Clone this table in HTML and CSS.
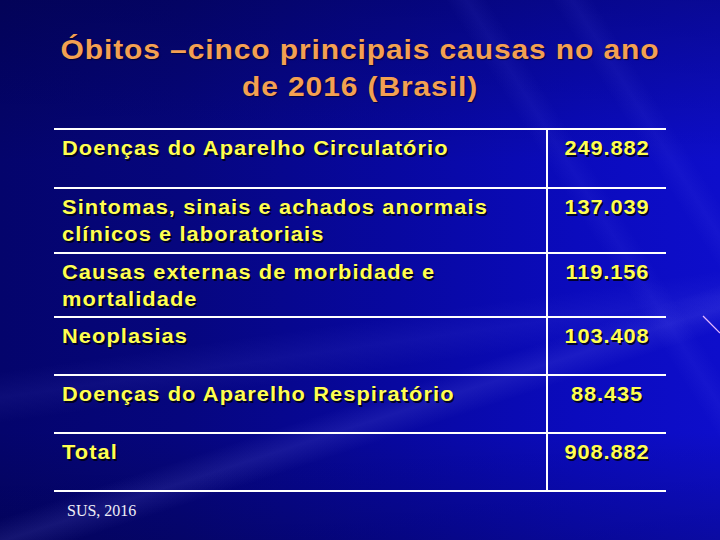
FILE: index.html
```html
<!DOCTYPE html>
<html lang="pt-BR">
<head>
<meta charset="utf-8">
<title>Óbitos – cinco principais causas</title>
<link rel="stylesheet" href="styles.css">
</head>
<body>
<div class="slide">
  <svg class="streak-line" width="20" height="20" viewBox="0 0 20 20"><line x1="1" y1="1" x2="18" y2="18" stroke="#e6b8ff" stroke-width="1.2"/></svg>
  <h1 class="title">
    <span class="title-line">Óbitos –cinco principais causas no ano</span>
    <span class="title-line">de 2016 (Brasil)</span>
  </h1>
  <div class="table">
    <div class="row">
      <div class="cell label"><span class="txt">Doenças do Aparelho Circulatório</span></div>
      <div class="cell value"><span class="num">249.882</span></div>
    </div>
    <div class="row two">
      <div class="cell label"><span class="txt">Sintomas, sinais e achados anormais<br>clínicos e laboratoriais</span></div>
      <div class="cell value"><span class="num">137.039</span></div>
    </div>
    <div class="row two">
      <div class="cell label"><span class="txt">Causas externas de morbidade e<br>mortalidade</span></div>
      <div class="cell value"><span class="num">119.156</span></div>
    </div>
    <div class="row">
      <div class="cell label"><span class="txt">Neoplasias</span></div>
      <div class="cell value"><span class="num">103.408</span></div>
    </div>
    <div class="row">
      <div class="cell label"><span class="txt">Doenças do Aparelho Respiratório</span></div>
      <div class="cell value"><span class="num">88.435</span></div>
    </div>
    <div class="row last">
      <div class="cell label"><span class="txt">Total</span></div>
      <div class="cell value"><span class="num">908.882</span></div>
    </div>
  </div>
  <p class="source">SUS, 2016</p>
</div>
</body>
</html>
```
FILE: styles.css
```css
html, body {
  margin: 0;
  padding: 0;
  width: 720px;
  height: 540px;
  overflow: hidden;
}

.slide {
  position: relative;
  width: 720px;
  height: 540px;
  overflow: hidden;
  box-sizing: border-box;
  padding-top: 31px;
  background-color: #0909a0;
  background-image:
    linear-gradient(58deg, transparent 74%, rgba(110,110,255,0.08) 76%, transparent 78%, transparent 84%, rgba(110,110,255,0.08) 86%, transparent 88%),
    linear-gradient(162deg, transparent 67%, rgba(140,140,255,0.13) 70%, transparent 73%),
    linear-gradient(172deg, transparent 58%, rgba(120,120,255,0.08) 62%, transparent 66%),
    linear-gradient(to bottom, rgba(0,0,50,0.35) 0%, rgba(0,0,50,0) 30%, rgba(0,0,50,0) 80%, rgba(0,0,40,0.25) 100%),
    linear-gradient(to right, #04046c 0%, #06067e 25%, #0808a0 55%, #0b0bbd 80%, #0e0ecb 100%);
  font-family: "Liberation Sans", Arial, sans-serif;
}

.streak-line {
  position: absolute;
  left: 702px;
  top: 315px;
}

.title {
  margin: 0;
  font-weight: bold;
  font-size: 28px;
  line-height: 37px;
  letter-spacing: 0.85px;
  color: #f3a052;
  text-align: center;
  text-shadow: 1px 1px 1px rgba(0,0,30,0.7);
}

.title-line {
  display: block;
  transform: scaleX(1.07);
  transform-origin: center;
}

.table {
  margin: 23px 0 0 54px;
  width: 612px;
  display: flex;
  flex-direction: column;
}

.row {
  display: grid;
  grid-template-columns: 492px 120px;
  height: 58px;
  box-sizing: border-box;
  border-top: 2px solid #ffffff;
}

.row:first-child { height: 59px; }
.row.two { height: 64px; }
.row.two:nth-child(2) { height: 65px; }
.row.last { border-bottom: 2px solid #ffffff; height: 60px; }

.cell {
  padding-top: 5px;
  font-weight: bold;
  font-size: 20px;
  line-height: 27px;
  color: #ffff50;
  text-shadow: 1.5px 1.5px 0.5px rgba(0,0,20,0.85);
  white-space: nowrap;
}

.label {
  padding-left: 8px;
}

.value {
  border-left: 2px solid #ffffff;
  text-align: center;
}

.txt {
  display: inline-block;
  letter-spacing: 1px;
  transform: scaleX(1.09);
  transform-origin: left top;
}

.num {
  display: inline-block;
  letter-spacing: 0.8px;
  transform: scaleX(1.09);
  transform-origin: center top;
}

.source {
  margin: 9px 0 0 67px;
  font-family: "Liberation Serif", "Times New Roman", serif;
  font-size: 16px;
  line-height: 20px;
  color: #eeeef6;
}
```
